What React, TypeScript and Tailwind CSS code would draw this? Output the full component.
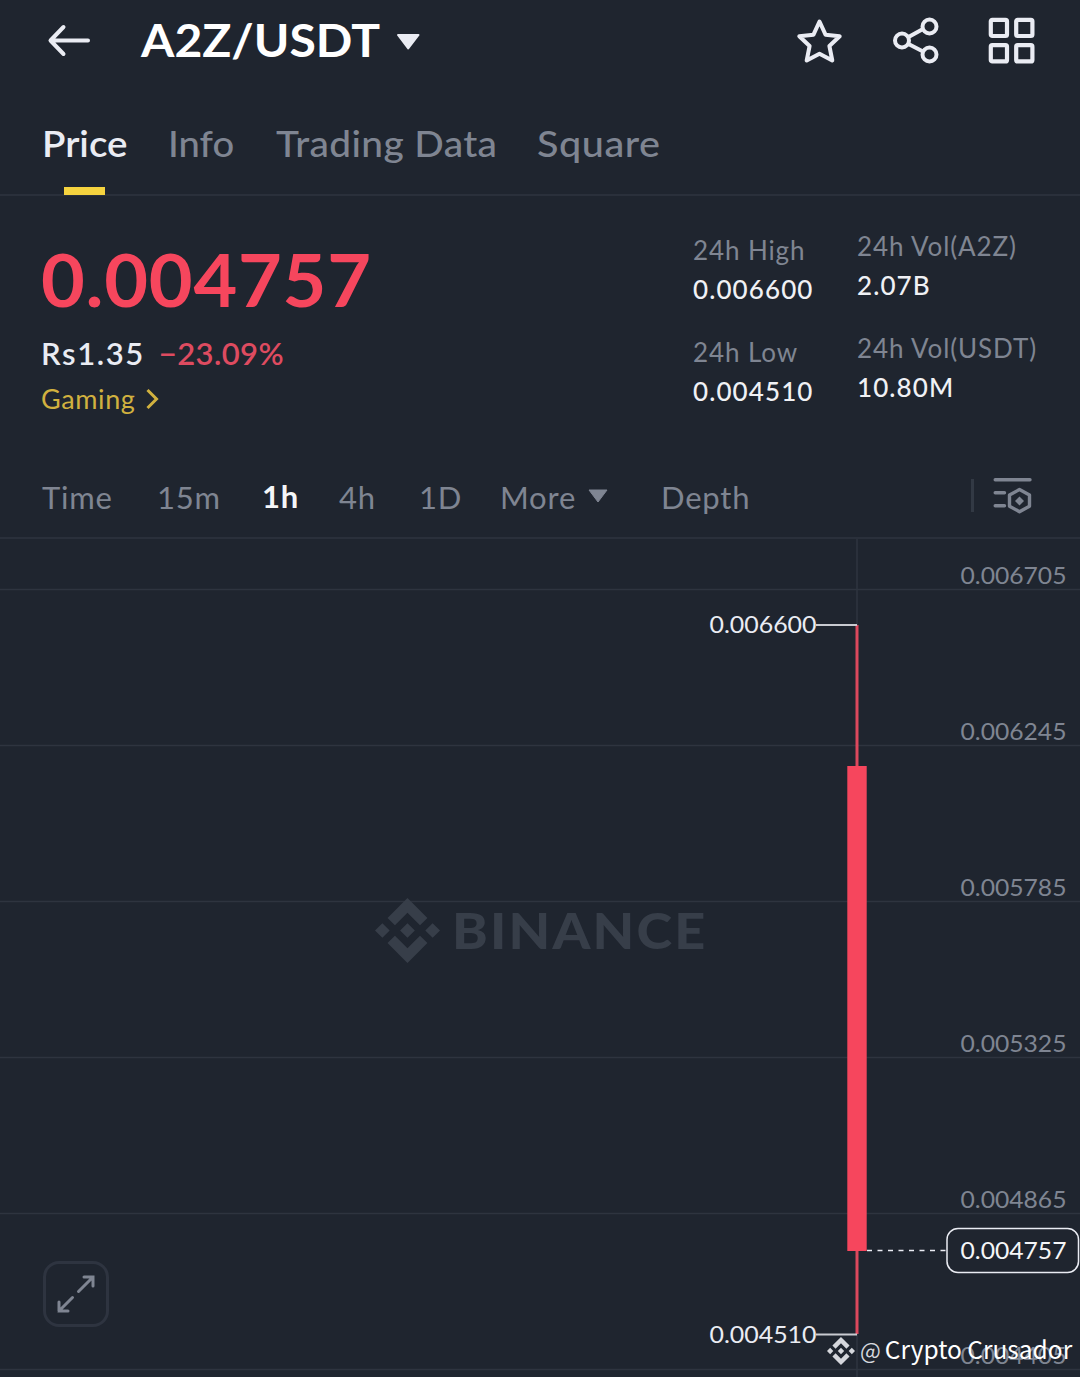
import { SiBinance } from "react-icons/si";

const tabs = [
  { label: "Price", className: "w-[126px] font-semibold text-[#eaecf3]", textClass: "scale-x-[1.040]" },
  { label: "Info", className: "w-[108px] text-[#7f8592]", textClass: "scale-x-[1.030]" },
  { label: "Trading Data", className: "w-[261px] text-[#7f8592]", textClass: "scale-x-[1.050] tracking-[0.350px]" },
  { label: "Square", className: "text-[#7f8592]", textClass: "scale-x-[1.070] tracking-[0.500px]" },
];

const intervals = [
  { label: "Time", className: "w-[115px]" },
  { label: "15m", className: "w-[105px]" },
  { label: "1h", className: "mb-[2px] w-[77px] font-bold text-[#f5f6f8]" },
  { label: "4h", className: "w-[80px]" },
  { label: "1D", className: "w-[81px]" },
];

const gridLines = [
  { y: 50, label: "0.006705" },
  { y: 206, label: "0.006245" },
  { y: 362, label: "0.005785" },
  { y: 518, label: "0.005325" },
  { y: 674, label: "0.004865" },
  { y: 830, label: "0.004405" },
];

function Header() {
  return (
    <header className="flex h-[88px] items-start text-[#eaecf3]">
      <svg className="mt-[20px] ml-[46px] h-[42px] w-[46px]" viewBox="0 0 46 42" fill="none" stroke="currentColor" strokeWidth="4" strokeLinecap="round" strokeLinejoin="round">
        <path d="M42 20.500H5M17.500 7L4.500 20.500L17.500 34" />
      </svg>
      <h1 className="mt-[12px] ml-[49px] w-[255px] origin-left scale-x-[1.045] text-[46px] leading-[56px] font-bold whitespace-nowrap text-white">
        A2Z/USDT
      </h1>
      <svg className="mt-[33px] h-[18px] w-[25px]" viewBox="0 0 25 18" fill="currentColor" stroke="currentColor" strokeWidth="2" strokeLinejoin="round">
        <path d="M2 2H22.500L12.200 15.500Z" />
      </svg>
      <div className="mt-[16px] ml-auto flex gap-[45px] pr-[45px]">
        <svg className="h-[50px] w-[50px]" viewBox="0 0 50 50" fill="none" stroke="currentColor" strokeWidth="4" strokeLinejoin="round">
          <path d="M24.500 5.500L30.500 18.700L44.700 20.200L34.400 30L37.300 44.500L24.500 37.800L11.700 44.500L14.600 30L4.300 20.200L18.500 18.700Z" />
        </svg>
        <svg className="h-[50px] w-[50px]" viewBox="0 0 50 50" fill="none" stroke="currentColor" strokeWidth="4">
          <circle cx="12" cy="24.500" r="7" />
          <circle cx="39.500" cy="10.500" r="7" />
          <circle cx="39.500" cy="38.500" r="7" />
          <path d="M18.500 21L33 13M18.500 28L33 35.500" />
        </svg>
        <svg className="h-[50px] w-[50px]" viewBox="0 0 50 50" fill="none" stroke="currentColor" strokeWidth="4.200">
          <rect x="5.800" y="3.800" width="16.200" height="16.200" rx="1.500" />
          <rect x="31.200" y="3.800" width="16.200" height="16.200" rx="1.500" />
          <rect x="5.800" y="29.200" width="16.200" height="16.200" rx="1.500" />
          <rect x="31.200" y="29.200" width="16.200" height="16.200" rx="1.500" />
        </svg>
      </div>
    </header>
  );
}

function Tabs() {
  return (
    <nav className="flex h-[108px] border-b-2 border-[#2a303b] pl-[42px] text-[37px] leading-[48px] font-medium whitespace-nowrap">
      {tabs.map((tab, i) => (
        <div key={tab.label} className={`flex h-[107px] flex-col justify-between pt-[31px] ${tab.className}`}>
          <span className={`origin-left self-start ${tab.textClass}`}>{tab.label}</span>
          {i === 0 && <span className="ml-[22px] h-[8px] w-[41px] bg-[#f5d33f]" />}
        </div>
      ))}
    </nav>
  );
}

function Stat({ label, value }: { label: string; value: string }) {
  return (
    <div className="h-[102px] text-[26px] whitespace-nowrap">
      <div className="leading-[39px] tracking-[0.900px] text-[#7f8592]">{label}</div>
      <div className="leading-[39px] font-medium tracking-[1.100px] text-[#f0f1f5]">{value}</div>
    </div>
  );
}

function Summary() {
  return (
    <section className="flex h-[262px] pl-[41px]">
      <div className="w-[652px] pt-[40px] whitespace-nowrap">
        <div className="origin-left scale-x-[1.050] text-[72px] leading-[86px] font-bold tracking-[0.700px] text-[#f6465d]">0.004757</div>
        <div className="mt-[12px] flex gap-[14px] text-[31px] leading-[38px] font-semibold">
          <span className="tracking-[1.600px] text-[#eaecf3]">Rs1.35</span>
          <span className="tracking-[0.400px] text-[#de4b60]">−23.09%</span>
        </div>
        <div className="mt-[9px] flex items-center gap-[11px] text-[27px] leading-[36px] text-[#d1b13f]">
          <span className="tracking-[0.600px]">Gaming</span>
          <svg className="h-[22px] w-[14px]" viewBox="0 0 14 22" fill="none" stroke="currentColor" strokeWidth="3">
            <path d="M1.500 2L10.500 11L1.500 20" />
          </svg>
        </div>
      </div>
      <div className="w-[164px] pt-[35px]">
        <Stat label="24h High" value="0.006600" />
        <Stat label="24h Low" value="0.004510" />
      </div>
      <div className="pt-[31px]">
        <Stat label="24h Vol(A2Z)" value="2.07B" />
        <Stat label="24h Vol(USDT)" value="10.80M" />
      </div>
    </section>
  );
}

function Intervals() {
  return (
    <div className="flex h-[81px] items-center border-b-2 border-[#2a303b] pl-[42px] text-[31px] tracking-[0.800px] whitespace-nowrap text-[#7f8592]">
      {intervals.map((item) => (
        <span key={item.label} className={item.className}>{item.label}</span>
      ))}
      <span className="w-[88px]">More</span>
      <svg className="mb-[3px] h-[14px] w-[20px]" viewBox="0 0 20 14" fill="currentColor" stroke="currentColor" strokeLinejoin="round">
        <path d="M1 1H19L10 13Z" />
      </svg>
      <span className="ml-[53px]">Depth</span>
      <span className="mb-[5px] ml-auto h-[33px] w-[3px] bg-[#323944]" />
      <svg className="mr-[46px] mb-[4px] ml-[18px] h-[38px] w-[42px]" viewBox="0 0 42 38" fill="none" stroke="currentColor" strokeWidth="3.400">
        <path d="M3.200 2.800H38M3.200 15.800H12.500M3.200 28.800H12.500" strokeLinecap="round" />
        <path d="M27.500 12.500L37.500 17.900V29.200L27.500 34.700L17.500 29.200V17.900Z" strokeLinejoin="round" />
        <path d="M27.500 19.500L32 24L27.500 28.500L23 24Z" fill="currentColor" stroke="none" />
      </svg>
    </div>
  );
}

function Chart() {
  return (
    <section className="relative h-[838px] overflow-hidden">
      <svg className="block h-[838px] w-[1080px]" viewBox="0 0 1080 838" fontSize="23">
        <path d="M857 0V838" stroke="#2a303b" strokeWidth="2" />
        {gridLines.map((line) => (
          <g key={line.label}>
            <path d={`M0 ${line.y + 0.500}H1080`} stroke="#2e343f" strokeWidth="1.500" />
            <text x="960.500" y={line.y - 5} textLength="106" lengthAdjust="spacingAndGlyphs" fill="#7f8592">{line.label}</text>
          </g>
        ))}
        <path d="M857 86V795" stroke="#dc485d" strokeWidth="3" />
        <rect x="847.300" y="227" width="19.400" height="485" fill="#f6465d" />
        <path d="M816 86H857M816 795.500H857" stroke="#c9cbd1" strokeWidth="1.800" />
        <g fill="#eaecf3">
          <text x="709.500" y="94" textLength="107" lengthAdjust="spacingAndGlyphs">0.006600</text>
          <text x="709.500" y="804" textLength="107" lengthAdjust="spacingAndGlyphs">0.004510</text>
        </g>
        <path d="M867 711.500H946" stroke="#eaecf3" strokeWidth="1.500" strokeDasharray="5 5.500" />
        <rect x="947" y="689.500" width="131.500" height="44" rx="11" fill="#1f252f" stroke="#eaecf3" strokeWidth="1.500" />
        <text x="960.500" y="720" textLength="106" lengthAdjust="spacingAndGlyphs" fill="#f5f6f8">0.004757</text>
      </svg>

      <div className="absolute top-[359px] left-[375px] flex items-center gap-[12px] text-[#373e49]">
        <SiBinance className="h-[65px] w-[65px]" />
        <span className="mb-[1px] origin-left scale-x-[1.080] text-[50px] leading-[60px] font-black tracking-[2px]">BINANCE</span>
      </div>

      <button className="absolute top-[722px] left-[43px] flex h-[66px] w-[66px] items-center justify-center rounded-[16px] border-[3px] border-[#2e3440] text-[#7f8592]">
        <svg className="h-[40px] w-[40px]" viewBox="0 0 40 40" fill="none" stroke="currentColor" strokeWidth="3" strokeLinecap="round">
          <path d="M22.500 17.500L36.500 3.500M28 3H37V12" />
          <path d="M16.500 23.500L3 37M12 37H3V28" />
        </svg>
      </button>

      <div className="absolute top-[792px] left-[827px] flex items-center font-['Noto_Sans_CJK_SC',sans-serif] whitespace-nowrap text-white">
        <SiBinance className="mt-[4px] h-[28px] w-[28px] text-[#d5d7dc]" />
        <span className="ml-[5px] text-[22px] leading-[36px] text-[#d5d7dc]">@</span>
        <span className="ml-[4px] text-[24.500px] leading-[36px]">Crypto Crusador</span>
      </div>
    </section>
  );
}

export default function App() {
  return (
    <main className="h-[1377px] w-[1080px] overflow-hidden bg-[#1f252f] font-[Lato,sans-serif]">
      <Header />
      <Tabs />
      <Summary />
      <Intervals />
      <Chart />
    </main>
  );
}
